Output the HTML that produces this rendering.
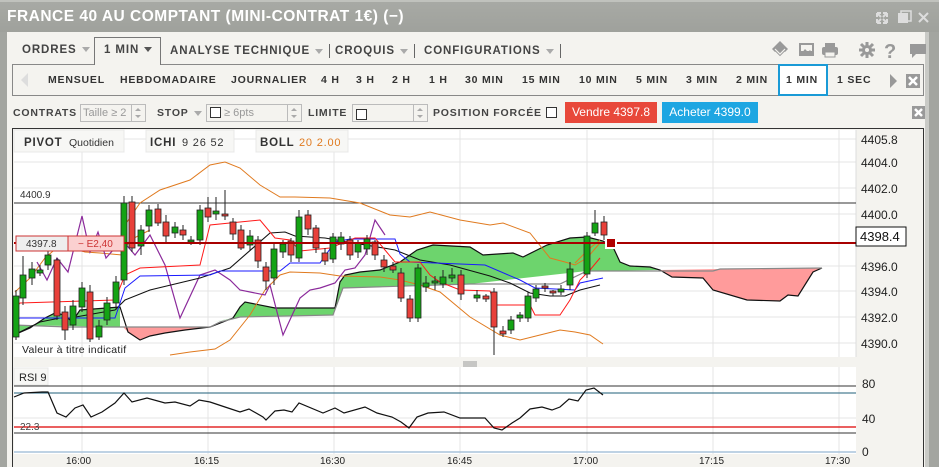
<!DOCTYPE html>
<html><head><meta charset="utf-8"><style>
*{margin:0;padding:0;box-sizing:border-box}
body{width:939px;height:467px;overflow:hidden;background:#a3a5a0;font-family:"Liberation Sans",sans-serif;position:relative}
.abs{position:absolute}
.t{font-weight:bold;font-size:11.5px;color:#444;letter-spacing:0.9px;white-space:nowrap}
.tf{font-weight:bold;font-size:10.5px;color:#333;letter-spacing:0.8px;white-space:nowrap}
.arr{display:inline-block;width:0;height:0;border-left:4px solid transparent;border-right:4px solid transparent;border-top:5px solid #aaa;vertical-align:middle;margin-left:5px}
.sep{display:inline-block;width:1px;height:14px;background:#666;vertical-align:middle;margin-left:6px}
.spin{position:absolute;right:0;top:0;width:14px;height:16px;border-left:1px solid #bbb}
.spin:before{content:"";position:absolute;left:3px;top:3px;border-left:3px solid transparent;border-right:3px solid transparent;border-bottom:3px solid #aaa}
.spin:after{content:"";position:absolute;left:3px;top:10px;border-left:3px solid transparent;border-right:3px solid transparent;border-top:3px solid #aaa}
</style></head><body>
<div class="abs" style="left:0;top:0;width:939px;height:32px;background:linear-gradient(#a8aaa5,#9fa19c)"></div>
<div class="abs" style="left:0;top:0;width:939px;height:2px;background:#c0c2bd"></div>
<div class="abs" style="left:7px;top:8px;color:#fff;font-weight:bold;font-size:15.5px;letter-spacing:0.5px">FRANCE 40 AU COMPTANT (MINI-CONTRAT 1€) (−)</div>
<svg class="abs" style="left:874px;top:10px" width="60" height="16">
<g stroke="#ddd" stroke-width="2" fill="none"><path d="M3 3l4 4M3 3h4M3 3v4M13 3l-4 4M13 3h-4M13 3v4M3 13l4-4M3 13h4M3 13v-4M13 13l-4-4M13 13h-4M13 13v-4"/></g>
<rect x="24" y="3" width="10" height="10" fill="#ddd"/><rect x="27" y="1" width="10" height="10" fill="none" stroke="#ddd" stroke-width="1.5"/>
<path d="M45 3l9 9M54 3l-9 9" stroke="#ddd" stroke-width="2"/></svg>
<div class="abs" style="left:7px;top:32px;width:918px;height:435px;background:#f4f3ef"></div>
<div class="abs" style="left:925px;top:32px;width:4px;height:435px;background:#c9cac6"></div>
<div class="abs" style="left:94px;top:37px;width:67px;height:28px;border:1px solid #777;border-bottom:none;background:#f4f3ef;z-index:2"></div>
<div class="abs t" style="left:22px;top:44px;z-index:3">ORDRES<span class="arr"></span></div>
<div class="abs t" style="left:104px;top:44px;z-index:3">1 MIN<span class="arr" style="border-top-color:#555"></span></div>
<div class="abs t" style="left:170px;top:44px;z-index:3">ANALYSE TECHNIQUE<span class="arr"></span><span class="sep"></span></div>
<div class="abs t" style="left:335px;top:44px;z-index:3">CROQUIS<span class="arr"></span><span class="sep"></span></div>
<div class="abs t" style="left:424px;top:44px;z-index:3">CONFIGURATIONS<span class="arr"></span><span class="sep"></span></div>
<svg class="abs" style="left:770px;top:40px" width="160" height="22">
<g fill="#999"><path d="M10 1l8 8-8 8-8-8z"/><path d="M5 9l5 5 5-5" stroke="#f4f3ef" stroke-width="1.2" fill="none"/><path d="M5 12l5 5 5-5" stroke="#f4f3ef" stroke-width="1.2" fill="none"/>
<rect x="29" y="3" width="15" height="13"/><rect x="31" y="5" width="11" height="6" fill="#f4f3ef"/><path d="M31 14l4-5 3 3 2-2 3 4z"/>
<rect x="55" y="3" width="10" height="4"/><rect x="52" y="7" width="16" height="8" rx="2"/><rect x="55" y="12" width="10" height="5" fill="#f4f3ef" stroke="#999"/>
<circle cx="97" cy="10" r="5"/><path d="M97 2v16M89 10h16M91 4l12 12M103 4l-12 12" stroke="#999" stroke-width="3"/><circle cx="97" cy="10" r="2" fill="#f4f3ef"/>
<text x="114" y="18" font-size="20" font-weight="bold" font-family="Liberation Sans">?</text>
<path d="M140 4h16v10h-10l-4 4v-4h-2z"/></g></svg>
<div class="abs" style="left:12px;top:64px;width:912px;height:32px;border:1px solid #888"></div>
<svg class="abs" style="left:20px;top:72px" width="10" height="16"><path d="M8 1v14L1 8z" fill="#ddd"/></svg>
<div class="abs" style="left:778px;top:64px;width:50px;height:32px;border:2px solid #1a9ad6;background:#fff"></div>
<div class="abs tf" style="left:48px;top:74px">MENSUEL</div>
<div class="abs tf" style="left:120px;top:74px">HEBDOMADAIRE</div>
<div class="abs tf" style="left:231px;top:74px">JOURNALIER</div>
<div class="abs tf" style="left:321px;top:74px">4 H</div>
<div class="abs tf" style="left:356px;top:74px">3 H</div>
<div class="abs tf" style="left:392px;top:74px">2 H</div>
<div class="abs tf" style="left:429px;top:74px">1 H</div>
<div class="abs tf" style="left:465px;top:74px">30 MIN</div>
<div class="abs tf" style="left:522px;top:74px">15 MIN</div>
<div class="abs tf" style="left:579px;top:74px">10 MIN</div>
<div class="abs tf" style="left:636px;top:74px">5 MIN</div>
<div class="abs tf" style="left:686px;top:74px">3 MIN</div>
<div class="abs tf" style="left:736px;top:74px">2 MIN</div>
<div class="abs tf" style="left:786px;top:74px">1 MIN</div>
<div class="abs tf" style="left:837px;top:74px">1 SEC</div>
<svg class="abs" style="left:888px;top:72px" width="40" height="18"><path d="M2 2v14l7-7z" fill="#999"/><rect x="18" y="2" width="14" height="14" fill="#999"/><path d="M21 5l8 8M29 5l-8 8" stroke="#fff" stroke-width="2.5"/></svg>
<div class="abs tf" style="left:13px;top:107px;color:#444">CONTRATS</div>
<div class="abs" style="left:80px;top:104px;width:66px;height:18px;border:1px solid #bbb;font-size:11px;color:#999;padding:2px 0 0 2px">Taille ≥ 2<span class="spin"></span></div>
<div class="abs tf" style="left:157px;top:107px;color:#444">STOP<span class="arr"></span></div>
<div class="abs" style="left:206px;top:104px;width:96px;height:18px;border:1px solid #bbb;font-size:11px;color:#999;padding:2px 0 0 3px"><span style="display:inline-block;width:11px;height:11px;border:1px solid #333;vertical-align:-2px;background:#fff"></span> ≥ 6pts<span class="spin"></span></div>
<div class="abs tf" style="left:308px;top:107px;color:#444">LIMITE</div>
<div class="abs" style="left:352px;top:104px;width:76px;height:18px;border:1px solid #bbb;padding:2px 0 0 3px"><span style="display:inline-block;width:11px;height:11px;border:1px solid #333;background:#fff"></span><span class="spin"></span></div>
<div class="abs tf" style="left:433px;top:107px;color:#444">POSITION FORCÉE <span style="display:inline-block;width:11px;height:11px;border:1px solid #333;vertical-align:-2px;background:#fff"></span></div>
<div class="abs" style="left:565px;top:102px;width:92px;height:21px;background:#e8483a;color:#fff;font-size:12px;text-align:center;line-height:21px">Vendre 4397.8</div>
<div class="abs" style="left:662px;top:102px;width:96px;height:21px;background:#1ea6e2;color:#fff;font-size:12px;text-align:center;line-height:21px">Acheter 4399.0</div>
<svg class="abs" style="left:912px;top:106px" width="14" height="14"><rect width="13" height="13" fill="#999"/><path d="M3 3l7 7M10 3l-7 7" stroke="#fff" stroke-width="2.5"/></svg>
<div class="abs" style="left:12px;top:128px;width:912px;height:339px;border:1px solid #333;border-bottom:none;background:#f4f3ef"></div>
<svg class="abs" style="left:0;top:0" width="939" height="467" font-family="Liberation Sans">
<rect x="14" y="130" width="842" height="227" fill="#fff"/>
<rect x="14" y="367" width="842" height="87" fill="#fff"/>
<g stroke="#e4e4e4" stroke-width="1">
<path d="M14 139H856M14 162H856M14 188H856M14 214H856M14 266H856M14 291H856M14 317H856M14 343H856"/>
<path d="M82 130V357M208 130V357M334 130V357M460 130V357M587 130V357M713 130V357M839 130V357"/>
<path d="M82 367V454M208 367V454M334 367V454M460 367V454M587 367V454M713 367V454M839 367V454M14 418H856"/>
</g>
<line x1="856" y1="130" x2="856" y2="357" stroke="#ddd"/>
<path d="M14 335L30 328L45 318L55 313L65 315L72 322L80 310L120 307L120 327L14 325Z" fill="#6dd46d"/>
<path d="M123 327L210 327L185 330L165 333L150 336L140 340L128 332Z" fill="#ff9b9b"/>
<path d="M213 322L233 318L240 307L245 302L275 308L335 308L340 282L345 275L360 272L380 270L400 262L417 250L433 245L470 247L483 255L513 253L523 257L547 245L570 238L587 237L603 241L613 247L620 262L630 266L650 267L660 270L587 271L470 284L343 288L333 315L240 317Z" fill="#6dd46d"/>
<path d="M660 270L672 277L703 278L713 290L747 300L780 301L788 295L798 296L813 272L822 268L720 269Z" fill="#ff9b9b"/>
<path d="M14 335L30 328L45 318L55 313L65 315L72 322L80 310L120 307L128 332L140 340L150 336L165 333L185 330L210 327L233 318L240 307L245 302L275 308L335 308L340 282L345 275L360 272L380 270L400 262L417 250L433 245L470 247L483 255L513 253L523 257L547 245L570 238L587 237L603 241L613 247L620 262L630 266L650 267L660 270L672 277L703 278L713 290L747 300L780 301L788 295L798 296L813 272L822 268" fill="none" stroke="#111" stroke-width="1.2"/>
<path d="M14 325L68 327L210 327L220 322L240 317L333 315L343 288L470 284L560 284L587 271L713 271L720 269L822 268" fill="none" stroke="#888" stroke-width="1.2"/>
<line x1="14" y1="203" x2="856" y2="203" stroke="#333"/>
<text x="20" y="198" font-size="10" fill="#333">4400.9</text>
<path d="M125 225L140 203L160 190L190 180L210 165L225 162L240 168L260 185L280 197L295 197L330 198L360 203L390 215L410 217L430 212L460 220L490 225L503 223L530 233L550 258L565 262L575 265L587 258L600 243" fill="none" stroke="#e07a1f"/>
<path d="M170 355L190 352L215 349L230 340L250 315L265 290L280 275L290 272L320 273L340 276L380 277L400 280L420 285L440 292L470 317L500 335L520 340L540 335L560 330L575 332L590 335L603 344" fill="none" stroke="#e07a1f"/>
<path d="M15 292L30 278L45 258L60 245L85 252L100 253L122 255L130 240L140 235L150 230" fill="none" stroke="#e07a1f"/>
<path d="M575 263L590 248L600 240" fill="none" stroke="#e07a1f"/>
<path d="M37 262L47 280L57 258L68 272L82 216L90 252L98 232L106 258L122 240L135 255L150 235L165 265L180 318L200 275L215 270L230 280L240 290L265 295L270 285L283 335L300 298L310 290L320 288L335 283L345 270L355 268L365 255L375 220L385 235" fill="none" stroke="#8b2a9b" stroke-width="1.2"/>
<path d="M14 335L40 322L60 318L70 318L115 310L125 300L150 290L200 278L230 268L270 233L285 232L295 236L325 238L395 250L420 260L450 265L490 276L510 283L530 293L550 296L565 296L580 290L600 285" fill="none" stroke="#111" stroke-width="1.1"/>
<path d="M14 320L20 318L115 318L125 288L140 276L210 275L220 271L280 271L290 263L320 263L335 242L350 239L395 239L400 254L410 262L485 265L520 280L535 288L575 290L580 283L603 278" fill="none" stroke="#1a1aff"/>
<path d="M14 310L20 303L115 300L125 275L140 268L200 265L210 225L260 220L275 238L290 240L300 251L330 248L355 238L375 238L385 250L395 262L420 262L430 275L440 282L460 290L490 291L495 305L530 305L535 315L560 315L570 300L580 280L590 270L600 258" fill="none" stroke="#ff1a1a"/>
<g stroke="#222" stroke-width="1">
<path d="M16 290V340M23 256V305M32 262V285M40 265V276M48 250V270M57 258V320M65 306V340M73 300V330M82 282V312M90 285V342M99 320V340M107 297V325M116 276V310M124 196V285M132 196V252M141 225V255M149 205V232M158 204V226M166 215V242M175 222V238M183 225V240M191 236V245M200 205V245M208 197V222M216 197V220M225 190V220M233 218V240M241 225V250M250 230V250M258 236V268M266 262V290M274 244V285M283 240V258M291 238V262M299 210V262M308 210V235M316 225V253M325 248V265M333 233V263M341 232V250M350 236V260M358 240V258M367 235V255M375 240V260M384 255V272M393 262V273M401 268V302M410 295V322M418 264V322M426 276V292M435 276V290M443 270V288M452 268V282M461 270V300M477 290V302M486 294V302M494 288V355M503 326V337M511 316V334M520 312V322M528 292V322M536 285V302M545 283V292M553 290V296M561 285V295M570 262V290M587 232V278M595 210V236M604 216V240"/>
</g>
<g fill="#14a314" stroke="#222" stroke-width="0.8">
<rect x="13" y="296" width="6" height="41"/><rect x="20" y="275" width="6" height="23"/><rect x="29" y="269" width="6" height="9"/><rect x="37" y="270" width="6" height="3"/><rect x="45" y="255" width="6" height="10"/><rect x="70" y="306" width="6" height="19"/><rect x="79" y="288" width="6" height="19"/><rect x="96" y="326" width="6" height="11"/><rect x="104" y="303" width="6" height="17"/><rect x="113" y="282" width="6" height="21"/><rect x="121" y="203" width="6" height="77"/><rect x="138" y="230" width="6" height="16"/><rect x="146" y="210" width="6" height="16"/><rect x="172" y="227" width="6" height="6"/><rect x="188" y="240" width="6" height="2"/><rect x="197" y="210" width="6" height="30"/><rect x="213" y="211" width="6" height="3"/><rect x="247" y="236" width="6" height="9"/><rect x="271" y="249" width="6" height="29"/><rect x="280" y="244" width="6" height="8"/><rect x="296" y="217" width="6" height="41"/><rect x="330" y="237" width="6" height="22"/><rect x="338" y="237" width="6" height="7"/><rect x="355" y="243" width="6" height="9"/><rect x="364" y="239" width="6" height="10"/><rect x="415" y="268" width="6" height="50"/><rect x="423" y="283" width="6" height="4"/><rect x="432" y="281" width="6" height="2"/><rect x="440" y="277" width="6" height="7"/><rect x="449" y="275" width="6" height="3"/><rect x="474" y="295" width="6" height="3"/><rect x="508" y="320" width="6" height="10"/><rect x="517" y="315" width="6" height="3"/><rect x="525" y="296" width="6" height="22"/><rect x="533" y="289" width="6" height="9"/><rect x="558" y="289" width="6" height="3"/><rect x="567" y="269" width="6" height="16"/><rect x="584" y="236" width="6" height="38"/><rect x="592" y="223" width="6" height="10"/>
</g>
<g fill="#e8403a" stroke="#222" stroke-width="0.8">
<rect x="54" y="260" width="6" height="56"/><rect x="62" y="312" width="6" height="18"/><rect x="87" y="292" width="6" height="47"/><rect x="129" y="202" width="6" height="46"/><rect x="155" y="209" width="6" height="14"/><rect x="163" y="222" width="6" height="14"/><rect x="180" y="230" width="6" height="5"/><rect x="205" y="208" width="6" height="9"/><rect x="222" y="214" width="6" height="2"/><rect x="230" y="222" width="6" height="12"/><rect x="238" y="230" width="6" height="18"/><rect x="255" y="240" width="6" height="21"/><rect x="263" y="267" width="6" height="14"/><rect x="288" y="241" width="6" height="14"/><rect x="305" y="215" width="6" height="14"/><rect x="313" y="228" width="6" height="20"/><rect x="322" y="253" width="6" height="8"/><rect x="347" y="240" width="6" height="15"/><rect x="372" y="242" width="6" height="13"/><rect x="381" y="260" width="6" height="7"/><rect x="390" y="266" width="6" height="4"/><rect x="398" y="273" width="6" height="25"/><rect x="407" y="299" width="6" height="19"/><rect x="458" y="275" width="6" height="19"/><rect x="483" y="296" width="6" height="3"/><rect x="491" y="292" width="6" height="35"/><rect x="500" y="331" width="6" height="3"/><rect x="542" y="286" width="6" height="2"/><rect x="550" y="291" width="6" height="2"/><rect x="601" y="222" width="6" height="13"/>
</g>
<line x1="14" y1="243" x2="856" y2="243" stroke="#a80000" stroke-width="2"/>
<rect x="605" y="237" width="12" height="12" fill="#fff"/><rect x="607" y="239" width="8" height="8" fill="#b00000"/>
<rect x="16" y="236" width="52" height="15" fill="#eee" stroke="#c33"/>
<rect x="68" y="236" width="56" height="15" fill="#fbd0d0" stroke="#c33"/>
<text x="26" y="247" font-size="10" fill="#333">4397.8</text>
<text x="78" y="247" font-size="10" fill="#c33">− E2,40</text>
<rect x="856" y="227" width="50" height="19" fill="#fff" stroke="#111"/>
<text x="860" y="241" font-size="13" fill="#111">4398.4</text>
<rect x="14" y="130" width="110" height="22" fill="#f7f7f5" stroke="#e8e8e8"/>
<rect x="146" y="130" width="88" height="22" fill="#f7f7f5" stroke="#e8e8e8"/>
<rect x="256" y="130" width="92" height="22" fill="#f7f7f5" stroke="#e8e8e8"/>
<text x="24" y="146" font-size="11.5" font-weight="bold" fill="#333" letter-spacing="0.8">PIVOT</text><text x="69" y="146" font-size="10.5" fill="#333">Quotidien</text>
<text x="150" y="146" font-size="11.5" font-weight="bold" fill="#333" letter-spacing="0.8">ICHI</text><text x="182" y="146" font-size="11" fill="#333" letter-spacing="0.8">9  26  52</text>
<text x="260" y="146" font-size="11.5" font-weight="bold" fill="#333" letter-spacing="0.8">BOLL</text><text x="299" y="146" font-size="11" fill="#e07a1f" letter-spacing="0.8">20  2.00</text>
<text x="22" y="353" font-size="10.5" fill="#222" letter-spacing="0.3">Valeur à titre indicatif</text>
<g font-size="12" fill="#222">
<text x="861" y="144">4405.8</text><text x="861" y="167">4404.0</text><text x="861" y="193">4402.0</text><text x="861" y="219">4400.0</text><text x="861" y="271">4396.0</text><text x="861" y="296">4394.0</text><text x="861" y="322">4392.0</text><text x="861" y="348">4390.0</text></g>
<path d="M463 362h14M463 364h14M463 366h14" stroke="#999"/>
<line x1="14" y1="386" x2="856" y2="386" stroke="#333"/>
<line x1="14" y1="393" x2="856" y2="393" stroke="#1f5f7a"/>
<line x1="14" y1="427" x2="856" y2="427" stroke="#d00" stroke-width="1.3"/>
<line x1="14" y1="433" x2="856" y2="433" stroke="#333"/>
<line x1="14" y1="452" x2="856" y2="452" stroke="#a9c3dc" stroke-width="1.5"/>
<rect x="14" y="368" width="34" height="17" fill="#f7f7f5" stroke="#e8e8e8"/>
<text x="19" y="381" font-size="11" fill="#222">RSI  9</text>
<text x="20" y="430" font-size="10" fill="#444">22.3</text>
<path d="M14 397L24 393L42 392L48 392L57 413L66 417L75 408L83 405L91 417L102 412L115 403L124 393L132 402L147 398L165 403L175 402L190 406L199 400L210 402L225 407L240 412L249 409L263 417L266 420L275 411L284 410L292 412L299 403L323 413L335 408L344 413L365 407L377 413L392 417L401 422L409 428L417 417L428 413L444 412L460 418L485 418L494 428L502 430L512 423L520 418L530 409L542 407L552 410L560 407L569 399L578 401L586 390L594 388L603 395" fill="none" stroke="#111" stroke-width="1.2"/>
<g font-size="12" fill="#222"><text x="862" y="388">80</text><text x="862" y="423">40</text><text x="862" y="456">0</text></g>
<g font-size="10" fill="#222"><text x="66" y="464">16:00</text><text x="194" y="464">16:15</text><text x="320" y="464">16:30</text><text x="447" y="464">16:45</text><text x="573" y="464">17:00</text><text x="699" y="464">17:15</text><text x="825" y="464">17:30</text></g>
</svg>
</body></html>
